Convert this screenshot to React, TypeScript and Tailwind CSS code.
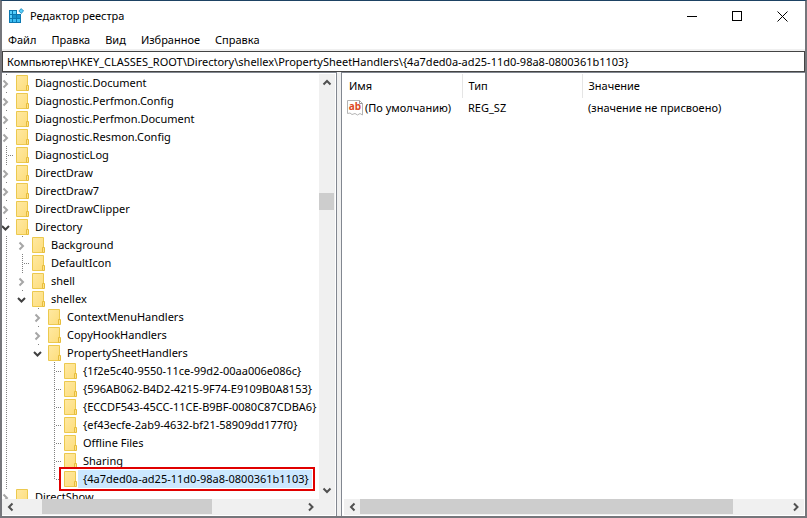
import { useState } from "react";

type Guide = "line" | "tee" | "end" | "none";
type Toggle = "open" | "closed" | "tee" | "end";

interface Node {
  name: string;
  guides: Guide[];
  toggle: Toggle;
}

const L: Guide = "line";
const N: Guide = "none";

const nodes: Node[] = [
  { name: "Diagnostic.Document", guides: [], toggle: "closed" },
  { name: "Diagnostic.Perfmon.Config", guides: [], toggle: "closed" },
  { name: "Diagnostic.Perfmon.Document", guides: [], toggle: "closed" },
  { name: "Diagnostic.Resmon.Config", guides: [], toggle: "closed" },
  { name: "DiagnosticLog", guides: [], toggle: "tee" },
  { name: "DirectDraw", guides: [], toggle: "closed" },
  { name: "DirectDraw7", guides: [], toggle: "closed" },
  { name: "DirectDrawClipper", guides: [], toggle: "closed" },
  { name: "Directory", guides: [], toggle: "open" },
  { name: "Background", guides: [L], toggle: "closed" },
  { name: "DefaultIcon", guides: [L], toggle: "tee" },
  { name: "shell", guides: [L], toggle: "closed" },
  { name: "shellex", guides: [L], toggle: "open" },
  { name: "ContextMenuHandlers", guides: [L, N], toggle: "closed" },
  { name: "CopyHookHandlers", guides: [L, N], toggle: "closed" },
  { name: "PropertySheetHandlers", guides: [L, N], toggle: "open" },
  { name: "{1f2e5c40-9550-11ce-99d2-00aa006e086c}", guides: [L, N, N], toggle: "tee" },
  { name: "{596AB062-B4D2-4215-9F74-E9109B0A8153}", guides: [L, N, N], toggle: "tee" },
  { name: "{ECCDF543-45CC-11CE-B9BF-0080C87CDBA6}", guides: [L, N, N], toggle: "tee" },
  { name: "{ef43ecfe-2ab9-4632-bf21-58909dd177f0}", guides: [L, N, N], toggle: "tee" },
  { name: "Offline Files", guides: [L, N, N], toggle: "tee" },
  { name: "Sharing", guides: [L, N, N], toggle: "tee" },
  { name: "{4a7ded0a-ad25-11d0-98a8-0800361b1103}", guides: [L, N, N], toggle: "end" },
  { name: "DirectShow", guides: [], toggle: "closed" },
];

const SELECTED = "{4a7ded0a-ad25-11d0-98a8-0800361b1103}";

function GuideCell({ kind }: { kind: Guide }) {
  return (
    <svg width="16" height="18" className="shrink-0" aria-hidden="true" shapeRendering="crispEdges">
      {kind !== "none" && (
        <path d={kind === "end" ? "M8.5 0V10" : "M8.5 0V18"} stroke="#808080" strokeDasharray="1 1" />
      )}
      {(kind === "tee" || kind === "end") && <path d="M10 9.5H16" stroke="#808080" strokeDasharray="1 1" />}
    </svg>
  );
}

function ToggleCell({ kind }: { kind: Toggle }) {
  if (kind === "tee" || kind === "end") return <GuideCell kind={kind} />;
  return (
    <svg width="16" height="18" className="shrink-0" aria-hidden="true" fill="none">
      <path d="M8 0h1v1H8z" fill="#808080" />
      {kind === "open" ? (
        <path d="M4 8L7.5 11.5L11 8" stroke="#404040" strokeWidth="2" />
      ) : (
        <path d="M5.5 6.5L9 10L5.5 13.5" stroke="#a6a6a6" strokeWidth="2" />
      )}
    </svg>
  );
}

function Folder() {
  return (
    <svg width="14" height="18" viewBox="0 0 14 18" className="shrink-0" aria-hidden="true">
      <defs>
        <linearGradient id="paper" x1="0" y1="0" x2="1" y2="1">
          <stop offset="0" stopColor="#ffe9a2" />
          <stop offset="1" stopColor="#fddd7c" />
        </linearGradient>
      </defs>
      <path d="M.5 1.5H11.5V16.5H.5Z" fill="url(#paper)" stroke="#ecc94f" />
      <path d="M10.5 11.5H12.5V16.5H10.5Z" fill="#ffe28a" stroke="#e6bd3c" />
    </svg>
  );
}

const arrows = {
  up: "M4.5 10.5L8 7L11.5 10.5",
  down: "M4.5 5.5L8 9L11.5 5.5",
  left: "M10.5 4.5L7 8L10.5 11.5",
  right: "M6 4.5L9.5 8L6 11.5",
};

function ArrowButton({ to, label }: { to: keyof typeof arrows; label: string }) {
  return (
    <button aria-label={label} className="size-4 shrink-0">
      <svg width="16" height="16" fill="none" aria-hidden="true">
        <path d={arrows[to]} stroke="#505050" strokeWidth="2" />
      </svg>
    </button>
  );
}

function AppIcon() {
  return (
    <svg width="16" height="16" viewBox="0 0 16 16" aria-hidden="true">
      <path d="M1 2H9V6H13V15H1Z" fill="#0b77b0" />
      <path d="M2 3H4V6H2ZM5 3H8V6H5ZM2 7H4V10H2Z" fill="#56cdfa" />
      <path d="M5 7H8V10H5ZM9 7H12V10H9Z" fill="#1492cf" />
      <path d="M5 11H8V14H5ZM2 11H4V14H2ZM9 11H12V14H9Z" fill="#3dbdf2" />
      <path d="M13.2 .6L15.6 3L13.2 5.4L10.8 3Z" fill="#56cdfa" stroke="#1480b5" strokeWidth=".8" />
    </svg>
  );
}

function StringIcon() {
  return (
    <svg width="16" height="16" viewBox="0 0 16 16" className="shrink-0" aria-hidden="true">
      <path
        d="M.5 .5H12.5L15.5 3.5V15L13 13.5L10.5 15L8 13.5L5 14.5L3 13L.5 13.5Z"
        fill="#fff"
        stroke="#b4b4b4"
      />
      <path d="M12.5 .5V3.5H15.5" fill="none" stroke="#999" />
      <text x="8" y="10" textAnchor="middle" fontFamily="'Noto Sans', sans-serif" fontWeight="700" fontSize="10" fill="#dc4a25">
        ab
      </text>
    </svg>
  );
}

const values = [{ name: "(По умолчанию)", type: "REG_SZ", value: "(значение не присвоено)" }];
const menu = ["Файл", "Правка", "Вид", "Избранное", "Справка"];

export default function App() {
  const [selected, setSelected] = useState(SELECTED);
  const [path, setPath] = useState(
    "Компьютер\\HKEY_CLASSES_ROOT\\Directory\\shellex\\PropertySheetHandlers\\" + SELECTED,
  );

  return (
    <div className="flex h-screen flex-col border-2 border-t border-[#75767b] border-t-[#1d4263] bg-[#f0f0f0] font-['Noto_Sans','Open_Sans',sans-serif] text-[11px] leading-4 text-black">
      <header className="flex h-[30px] shrink-0 items-center bg-white pl-[6px]">
        <AppIcon />
        <h1 className="ml-[6px] flex-1">Редактор реестра</h1>
        <div className="flex h-full">
          <button aria-label="Свернуть" className="flex w-[45px] items-center justify-center">
            <svg width="11" height="11" shapeRendering="crispEdges"><path d="M0 5.5H10" stroke="#000" /></svg>
          </button>
          <button aria-label="Развернуть" className="flex w-[45px] items-center justify-center">
            <svg width="11" height="11" shapeRendering="crispEdges"><path d="M.5 .5H9.5V9.5H.5Z" fill="none" stroke="#000" /></svg>
          </button>
          <button aria-label="Закрыть" className="flex w-[45px] items-center justify-center">
            <svg width="11" height="11"><path d="M.5 .5L10.5 10.5M10.5 .5L.5 10.5" stroke="#000" /></svg>
          </button>
        </div>
      </header>

      <nav className="flex h-[18px] shrink-0 items-center gap-[15px] bg-white pl-[6px]">
        {menu.map((m) => (
          <button key={m}>{m}</button>
        ))}
      </nav>

      <input
        aria-label="Адрес"
        value={path}
        onChange={(e) => setPath(e.target.value)}
        className="mt-[2px] h-[21px] w-full shrink-0 border border-[#444] bg-white px-1 outline-none"
      />

      <main className="flex min-h-0 flex-1">
        <section className="flex w-[335px] shrink-0 flex-col border-r border-t border-[#828790] bg-white pt-px pr-px">
          <div className="flex min-h-0 flex-1">
            <ul role="tree" aria-label="Разделы" className="min-w-0 flex-1 overflow-hidden">
              {nodes.map((n) => {
                const on = n.name === selected;
                return (
                  <li key={n.name} role="treeitem" aria-selected={on} className="relative -ml-1 flex h-[18px] items-center">
                    {n.guides.map((g, i) => (
                      <GuideCell key={i} kind={g} />
                    ))}
                    <ToggleCell kind={n.toggle} />
                    <button
                      onClick={() => setSelected(n.name)}
                      className="ml-[2px] flex h-[18px] items-center whitespace-nowrap"
                    >
                      <Folder />
                      <span className={`flex h-[18px] items-center pr-[3px] pl-[5px] ${on ? "bg-[#cce8ff]" : ""}`}>{n.name}</span>
                    </button>
                    {on && <span className="pointer-events-none absolute -inset-y-[3px] right-1 left-[61px] border-2 border-[#e00000]" />}
                  </li>
                );
              })}
            </ul>
            <div className="flex w-4 shrink-0 flex-col bg-[#f0f0f0]">
              <ArrowButton to="up" label="Вверх" />
              <div className="flex flex-1 flex-col">
                <div className="flex-[103]" />
                <div className="h-[17px] w-[15px] bg-[#cdcdcd]" />
                <div className="flex-[272]" />
              </div>
              <ArrowButton to="down" label="Вниз" />
            </div>
          </div>
          <div className="mb-px flex h-4 shrink-0 bg-[#f0f0f0]">
            <div className="flex w-[40px]"><ArrowButton to="left" label="Влево" /></div>
            <div className="h-[15px] w-[170px] bg-[#cdcdcd]" />
            <div className="flex flex-1 justify-end pr-4"><ArrowButton to="right" label="Вправо" /></div>
          </div>
        </section>

        <section className="ml-1 flex min-w-0 flex-1 flex-col border-t border-l border-[#828790] bg-white pt-px pr-px pl-[2px]">
          <div className="flex-1">
            <table className="w-full table-fixed border-collapse">
              <thead>
                <tr className="h-6 text-left">
                  <th className="w-[118px] border-r border-[#e5e5e5] pl-[5px] font-normal">Имя</th>
                  <th className="w-[120px] border-r border-[#e5e5e5] pl-[6px] font-normal">Тип</th>
                  <th className="pl-[6px] font-normal">Значение</th>
                </tr>
              </thead>
              <tbody>
                {values.map((v) => (
                  <tr key={v.name} className="h-5 whitespace-nowrap">
                    <td className="pl-[3px]">
                      <div className="flex items-center gap-[2px]">
                        <StringIcon />
                        {v.name}
                      </div>
                    </td>
                    <td className="pl-[6px]">{v.type}</td>
                    <td className="pl-[6px]">{v.value}</td>
                  </tr>
                ))}
              </tbody>
            </table>
          </div>
          <div className="mb-px flex h-4 shrink-0 bg-[#f0f0f0]">
            <ArrowButton to="left" label="Влево" />
            <div className="h-[15px] flex-[373] bg-[#cdcdcd]" />
            <div className="flex-[55]" />
            <ArrowButton to="right" label="Вправо" />
          </div>
        </section>
      </main>
    </div>
  );
}
